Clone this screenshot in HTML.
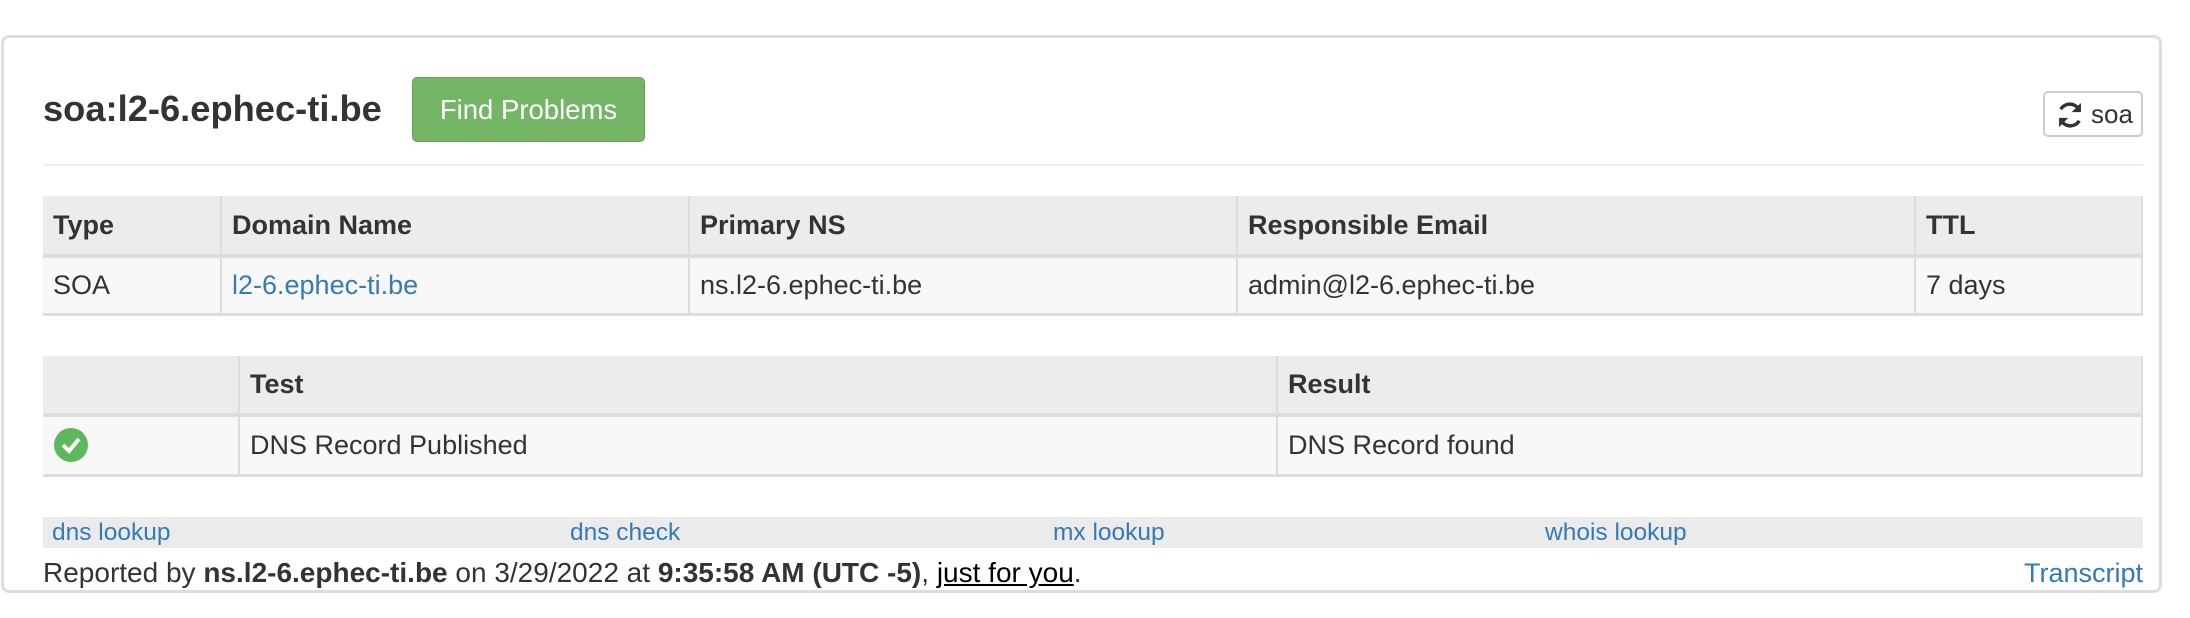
<!DOCTYPE html>
<html><head><meta charset="utf-8"><style>
*{box-sizing:border-box;margin:0;padding:0}
body{width:2190px;height:618px;background:#fff;font-family:"Liberation Sans",Arial,sans-serif;color:#333;position:relative;overflow:hidden}
.card{position:absolute;left:1px;top:35px;width:2161px;height:558px;border:3px solid #ddd;border-radius:8px}
.abs{position:absolute}
h1{position:absolute;left:43px;top:87px;font-size:36.3px;font-weight:bold;line-height:44px}
.btn{position:absolute;left:412px;top:77px;width:233px;height:65px;background:#74b566;border:1px solid #5fa351;border-radius:5px;color:#fff;font-size:27.5px;text-align:center;line-height:63px}
.sbtn{position:absolute;left:2043px;top:91px;width:100px;height:46px;border:2px solid #ccc;border-radius:5px;font-size:26px;line-height:42px;padding-left:46px;color:#333}
.hr{position:absolute;left:43px;top:164px;width:2100px;height:2px;background:#eee}
table{position:absolute;left:43px;width:2100px;border-collapse:collapse;font-size:27px}
th{background:#ececec;text-align:left;font-weight:bold;border-left:2px solid #ddd;border-bottom:4px solid #ddd;padding:0 10px}
td{background:#f8f8f8;border-left:2px solid #ddd;border-bottom:3px solid #ddd;padding:0 10px}
th:first-child,td:first-child{border-left:none}
tr th:last-child,tr td:last-child{border-right:2px solid #ddd}
a{color:#337ab7;text-decoration:none}
.links{position:absolute;left:43px;top:517px;width:2100px;height:31px;background:#ebebeb;font-size:24.5px;line-height:31px}
.links a{position:absolute;top:0}
.foot{position:absolute;left:43px;top:556px;font-size:28px;line-height:34px}
</style></head><body>
<div class="card"></div>
<h1>soa:l2-6.ephec-ti.be</h1>
<div class="btn">Find Problems</div>
<div class="sbtn"><svg class="abs" style="left:10px;top:7px" width="30" height="30" viewBox="0 0 26 26" fill="none" stroke="#333" stroke-width="3"><path d="M21 9A9 9 0 0 0 5 8"/><path d="M5 17A9 9 0 0 0 21 18"/><path d="M22 3v7h-7" fill="#333" stroke-width="1"/><path d="M4 23v-7h7" fill="#333" stroke-width="1"/></svg>soa</div>
<div class="hr"></div>
<table style="top:196px">
<tr style="height:60px"><th style="width:178px">Type</th><th style="width:468px">Domain Name</th><th style="width:548px">Primary NS</th><th style="width:678px">Responsible Email</th><th>TTL</th></tr>
<tr style="height:58px"><td>SOA</td><td><a>l2-6.ephec-ti.be</a></td><td>ns.l2-6.ephec-ti.be</td><td>admin@l2-6.ephec-ti.be</td><td>7 days</td></tr>
</table>
<table style="top:356px">
<tr style="height:59px"><th style="width:196px"></th><th style="width:1038px">Test</th><th>Result</th></tr>
<tr style="height:60px"><td><svg width="36" height="36" viewBox="0 0 36 36" style="display:block"><circle cx="18" cy="18" r="17" fill="#5cb85c"/><path d="M10 18l6 6 10-12" stroke="#fff" stroke-width="4" fill="none"/></svg></td><td>DNS Record Published</td><td>DNS Record found</td></tr>
</table>
<div class="links"><a style="left:9px">dns lookup</a><a style="left:527px">dns check</a><a style="left:1010px">mx lookup</a><a style="left:1502px">whois lookup</a></div>
<div class="foot">Reported by <b>ns.l2-6.ephec-ti.be</b> on 3/29/2022 at <b>9:35:58 AM (UTC -5)</b>, <u style="color:#000">just for you</u>.</div>
<a class="abs" style="right:47px;top:556px;font-size:27px;line-height:34px">Transcript</a>
</body></html>
